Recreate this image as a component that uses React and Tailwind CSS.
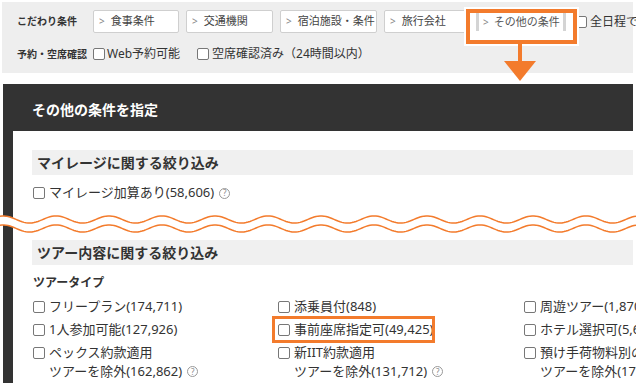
import React from 'react';

const ORANGE = '#f37b2c';

// 小さなチェックボックス
const Box = () => (
  <span className="w-[12px] h-[12px] shrink-0 border border-[#777] rounded-[2px] bg-white inline-block" />
);

const Help = () => (
  <span className="ml-[5px] w-[11px] h-[11px] rounded-full border border-[#999] text-[#888] text-[8px] leading-none inline-flex items-center justify-center shrink-0">
    ?
  </span>
);

const FilterButton = ({ label, width }) => (
  <div className={`${width} shrink-0 h-[23px] bg-white border border-[#cfcfcf] rounded-[2px] flex items-center pl-[5px] text-[11px] text-[#444] whitespace-nowrap`}>
    <span className="text-[#888] text-[10px] mr-[6px]">&gt;</span>
    {label}
  </div>
);

const Item = ({ lines, help }) => (
  <div className="flex items-start">
    <span className="mt-[4px] flex">
      <Box />
    </span>
    <div className="ml-[4px]">
      {lines.map((l, i) => (
        <div key={i} className="h-[19px] leading-[19px] flex items-center whitespace-nowrap">
          {l}
          {help && i === lines.length - 1 && <Help />}
        </div>
      ))}
    </div>
  </div>
);

// 途中省略の波線
const Wave = () => {
  const period = 53;
  const amp = 3.6;
  const pts = (cy) => {
    const arr = [];
    for (let x = 0; x <= 636; x += 2) {
      const y = cy - amp * Math.cos((2 * Math.PI * (x - 3)) / period);
      arr.push([x, y]);
    }
    return arr;
  };
  const top = pts(8.5);
  const bottom = pts(17.5);
  const line = (a) => a.map(([x, y], i) => `${i ? 'L' : 'M'}${x} ${y.toFixed(2)}`).join(' ');
  const fill =
    line(top) +
    ' ' +
    bottom
      .slice()
      .reverse()
      .map(([x, y]) => `L${x} ${y.toFixed(2)}`)
      .join(' ') +
    ' Z';
  return (
    <svg className="absolute left-0 top-[211px]" width="636" height="26" viewBox="0 0 636 26">
      <path d={fill} fill="#ffffff" />
      <path d={line(top)} fill="none" stroke={ORANGE} strokeWidth="1.5" />
      <path d={line(bottom)} fill="none" stroke={ORANGE} strokeWidth="1.5" />
    </svg>
  );
};

export default function App() {
  return (
    <div className="relative w-[636px] h-[383px] overflow-hidden bg-white text-[#333] font-['Noto_Sans','Noto_Sans_CJK_JP',sans-serif]">
      {/* 上部の条件バー */}
      <div className="ml-[2px] mt-[2px] w-[631px] h-[71px] bg-[#eeeeee] pl-[15px]">
        <div className="flex items-center pt-[8px] h-[31px]">
          <span className="w-[76px] shrink-0 text-[10px] font-bold whitespace-nowrap">こだわり条件</span>
          <div className="flex items-center gap-[7px] shrink-0">
            <FilterButton label="食事条件" width="w-[86px]" />
            <FilterButton label="交通機関" width="w-[87px]" />
            <FilterButton label="宿泊施設・条件" width="w-[97px]" />
            <FilterButton label="旅行会社" width="w-[85px]" />
            <div className="relative shrink-0">
              <div className="absolute -left-[10px] -top-[3px] w-[111px] h-[35px] bg-white border-4 border-[#f37b2c] shadow-[0_0_0_2px_#ffffff]" />
              <div className="relative w-[90px] h-[18px] mt-[1px] border-x-[3px] border-[#d4d4d4] flex items-center pl-[4px] text-[11px] text-[#555] whitespace-nowrap">
                <span className="text-[#888] text-[10px] mr-[5px]">&gt;</span>
                その他の条件
              </div>
            </div>
            <div className="flex items-center ml-[2px] text-[12px] whitespace-nowrap shrink-0">
              <Box />
              <span className="ml-[3px]">全日程で</span>
            </div>
          </div>
        </div>
        <div className="flex items-center mt-[12px] text-[12px] whitespace-nowrap">
          <span className="w-[76px] shrink-0 text-[10px] font-bold">予約・空席確認</span>
          <Box />
          <span className="ml-[2px]">Web予約可能</span>
          <span className="ml-[17px] flex">
            <Box />
          </span>
          <span className="ml-[3px]">空席確認済み（24時間以内）</span>
        </div>
      </div>

      {/* 矢印 */}
      <svg className="absolute left-[503px] top-[42px]" width="34" height="40" viewBox="0 0 34 40">
        <rect x="15" y="0" width="4" height="20" fill={ORANGE} />
        <polygon points="1,19 33,19 17,39" fill={ORANGE} />
      </svg>

      {/* モーダル */}
      <div className="ml-[3px] mt-[11px] w-[630px] h-[300px] bg-[#333333] pl-[10px]">
        <div className="h-[47px] flex items-center pl-[19px] pt-[4px] text-white text-[14px] font-bold">
          その他の条件を指定
        </div>
        <div className="bg-white h-[260px] pl-[19px] pt-[19px] text-[13px]">
          <div className="h-[25px] bg-[#f0f0f0] flex items-center pl-[5px] text-[14px] font-bold">
            マイレージに関する絞り込み
          </div>
          <div className="mt-[10px] pl-[1px] flex items-center h-[16px] whitespace-nowrap">
            <Box />
            <span className="ml-[4px]">マイレージ加算あり(58,606)</span>
            <Help />
          </div>

          <div className="mt-[39px] h-[25px] bg-[#f0f0f0] flex items-center pl-[5px] text-[14px] font-bold">
            ツアー内容に関する絞り込み
          </div>
          <div className="mt-[10px] pl-[1px] h-[16px] flex items-center text-[12px] font-bold">ツアータイプ</div>
          <div className="mt-[6px] pl-[1px] grid grid-cols-[245px_246px_200px] gap-y-[4px]">
            <Item lines={['フリープラン(174,711)']} />
            <Item lines={['添乗員付(848)']} />
            <Item lines={['周遊ツアー(1,870)']} />
            <Item lines={['1人参加可能(127,926)']} />
            <div className="relative">
              <span className="absolute -left-[6px] -top-[4px] w-[163px] h-[27px] border-[3px] border-[#f37b2c]" />
              <Item lines={['事前座席指定可(49,425)']} />
            </div>
            <Item lines={['ホテル選択可(5,621)']} />
            <Item lines={['ペックス約款適用', 'ツアーを除外(162,862)']} help />
            <Item lines={['新IIT約款適用', 'ツアーを除外(131,712)']} help />
            <Item lines={['預け手荷物料別の', 'ツアーを除外(17,540)']} help />
          </div>
        </div>
      </div>

      <Wave />
    </div>
  );
}
